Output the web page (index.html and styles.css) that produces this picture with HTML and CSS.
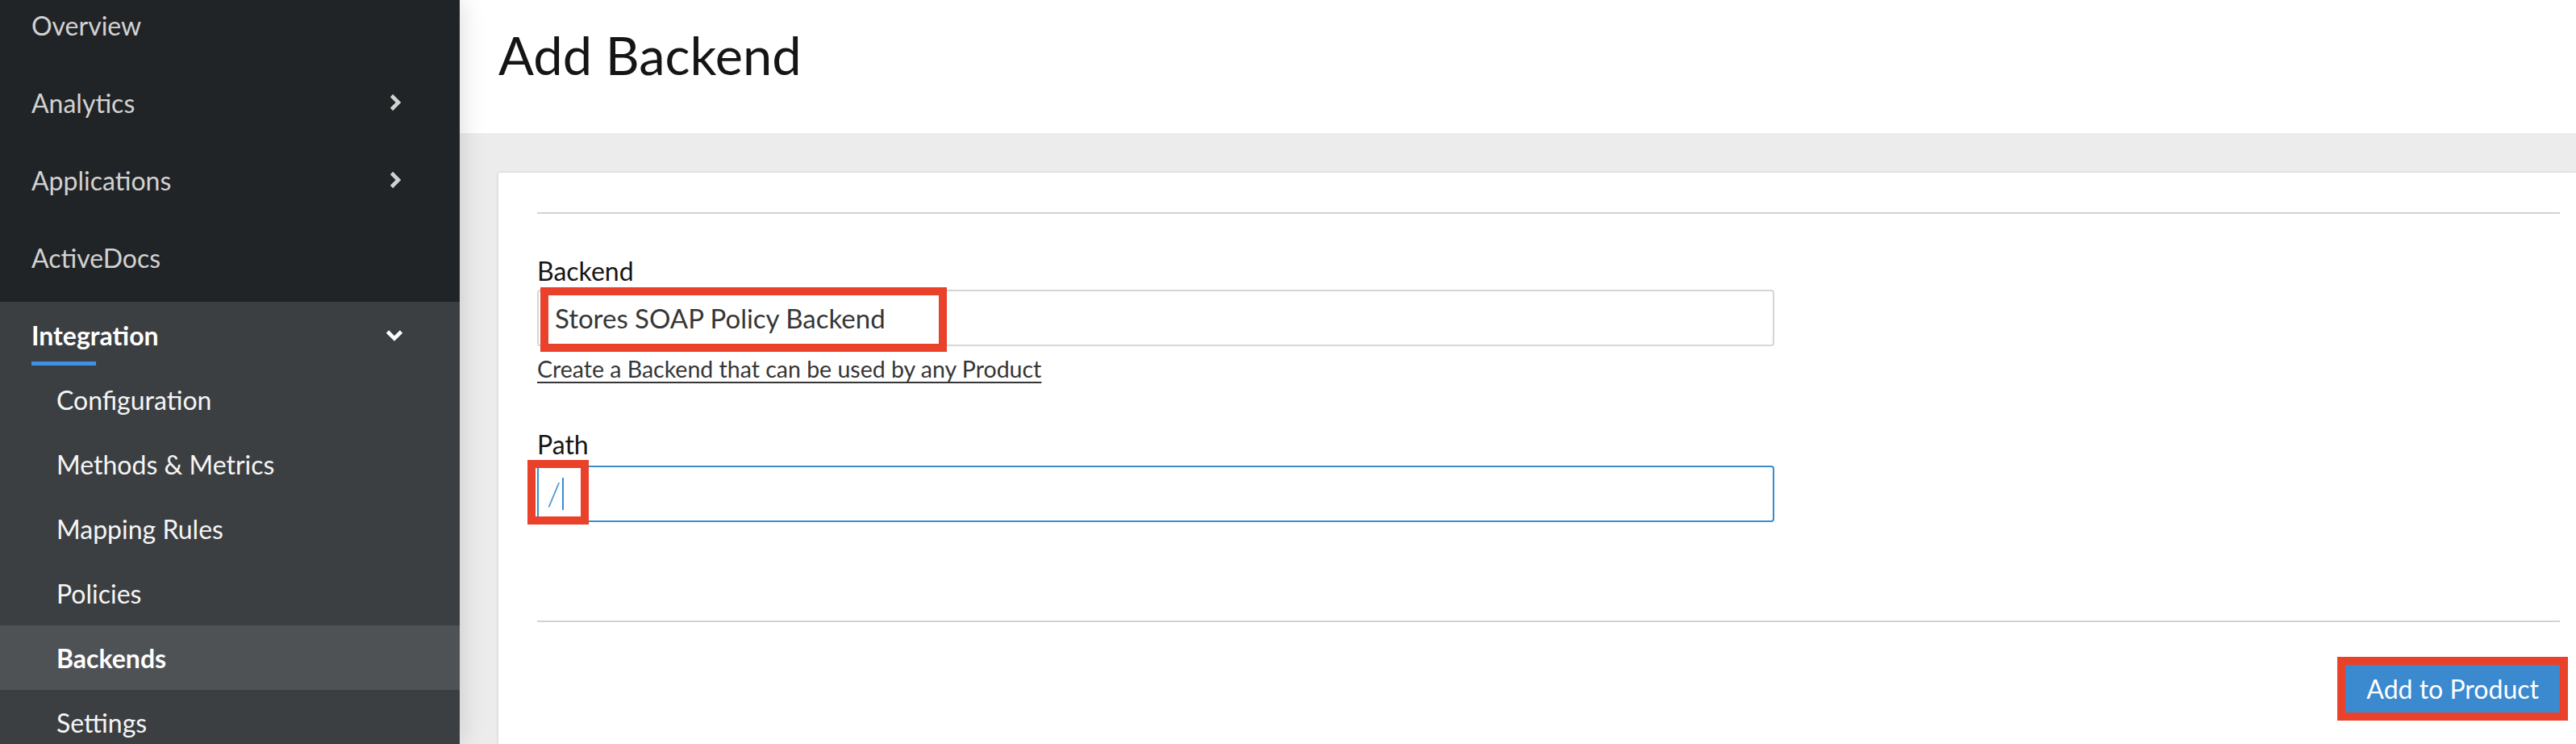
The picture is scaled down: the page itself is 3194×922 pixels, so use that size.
FILE: index.html
```html
<!DOCTYPE html>
<html lang="en">
<head>
<meta charset="utf-8">
<title>Add Backend</title>
<link rel="stylesheet" href="styles.css">
</head>
<body>
<div class="app">
  <aside class="sidebar">
    <ul class="nav">
      <li class="nav-item"><span>Overview</span></li>
      <li class="nav-item"><span>Analytics</span>
        <svg class="chev-right" width="16" height="22" viewBox="0 0 16 22"><path d="M3.5 2.5 L12 11 L3.5 19.5" fill="none" stroke="currentColor" stroke-width="4.6" stroke-linejoin="miter"/></svg>
      </li>
      <li class="nav-item"><span>Applications</span>
        <svg class="chev-right" width="16" height="22" viewBox="0 0 16 22"><path d="M3.5 2.5 L12 11 L3.5 19.5" fill="none" stroke="currentColor" stroke-width="4.6" stroke-linejoin="miter"/></svg>
      </li>
      <li class="nav-item"><span>ActiveDocs</span></li>
    </ul>
    <section class="nav-group">
      <div class="group-title">
        <div class="group-row">
          <span>Integration</span>
          <svg class="chev-down" width="22" height="15" viewBox="0 0 22 15"><path d="M2.5 3 L11 11.5 L19.5 3" fill="none" stroke="currentColor" stroke-width="4.6" stroke-linejoin="miter"/></svg>
        </div>
        <span class="group-bar"></span>
      </div>
      <ul class="subnav">
        <li class="sub-item">Configuration</li>
        <li class="sub-item">Methods &amp; Metrics</li>
        <li class="sub-item">Mapping Rules</li>
        <li class="sub-item">Policies</li>
        <li class="sub-item is-current">Backends</li>
        <li class="sub-item">Settings</li>
      </ul>
    </section>
  </aside>

  <main class="main">
    <header class="page-header">
      <h1 class="page-title">Add Backend</h1>
    </header>
    <section class="page-body">
      <form class="card">
        <hr class="rule">
        <div class="field field-backend">
          <label class="label" for="backend">Backend</label>
          <div class="control-wrap">
            <input class="control" id="backend" type="text" value="Stores SOAP Policy Backend" readonly>
            <span class="mark mark-backend"></span>
          </div>
          <a class="help-link" href="#">Create a Backend that can be used by any Product</a>
        </div>
        <div class="field field-path">
          <label class="label">Path</label>
          <div class="control-wrap">
            <div class="control control-focus"><span class="slash">/</span><span class="caret"></span></div>
            <span class="mark mark-path"></span>
          </div>
        </div>
        <hr class="rule rule-bottom">
        <div class="actions">
          <button class="btn-primary" type="button">Add to Product</button>
        </div>
      </form>
    </section>
  </main>
</div>
</body>
</html>
```

FILE: styles.css
```css
* { box-sizing: border-box; }

html, body {
  margin: 0;
  padding: 0;
  height: 100%;
  overflow: hidden;
}

body {
  font-family: "Lato", "Liberation Sans", sans-serif;
  background: #ececec;
  color: #151515;
}

.app {
  display: flex;
  height: 922px;
}

/* ---------- Sidebar ---------- */
.sidebar {
  position: relative;
  z-index: 2;
  width: 570px;
  flex: 0 0 570px;
  background: #212427;
  box-shadow: 0 0 30px rgba(0, 0, 0, 0.16);
  display: flex;
  flex-direction: column;
  overflow: hidden;
}

.nav {
  list-style: none;
  margin: -17px 0 0 0;
  padding: 0;
}

.nav-item {
  height: 96px;
  display: flex;
  align-items: center;
  justify-content: space-between;
  padding: 0 72px 0 39px;
  font-size: 32px;
  color: #d2d2d2;
}

.chev-right {
  color: #d2d2d2;
}

.nav-group {
  margin-top: 7px;
  background: #3c3f42;
  flex: 1;
}

.group-title {
  padding: 21px 70px 1px 39px;
  height: 81px;
  display: flex;
  flex-direction: column;
}

.group-row {
  height: 40px;
  display: flex;
  align-items: center;
  justify-content: space-between;
  font-size: 32px;
  font-weight: 700;
  color: #ffffff;
}

.chev-down {
  color: #ffffff;
}

.group-bar {
  display: block;
  width: 80px;
  height: 5px;
  margin-top: 13px;
  background: #3c92e8;
}

.subnav {
  list-style: none;
  margin: 0;
  padding: 0;
}

.sub-item {
  height: 80px;
  display: flex;
  align-items: center;
  padding-left: 70px;
  font-size: 32px;
  color: #f5f5f5;
}

.sub-item.is-current {
  background: #4f5255;
  font-weight: 700;
  color: #ffffff;
}

/* ---------- Main ---------- */
.main {
  flex: 1;
  display: flex;
  flex-direction: column;
  min-width: 0;
  background: #ececec;
}

.page-header {
  height: 165px;
  flex: 0 0 165px;
  background: #ffffff;
  padding: 30px 0 0 48px;
}

.page-title {
  margin: 0;
  font-size: 65px;
  line-height: 77px;
  font-weight: 400;
  color: #151515;
}

.page-body {
  flex: 1;
  display: flex;
  padding: 49px 0 0 48px;
}

.card {
  flex: 1;
  margin: 0;
  background: #ffffff;
  padding: 49px 20px 0 48px;
  box-shadow: -1px 0 3px rgba(0, 0, 0, 0.08), 0 -1px 2px rgba(0, 0, 0, 0.05);
}

.rule {
  margin: 0;
  border: 0;
  border-top: 2px solid #d2d2d2;
  height: 0;
}

.rule-bottom {
  margin-top: 122px;
}

.field-backend {
  margin-top: 52px;
}

.field-path {
  margin-top: 58px;
}

.label {
  display: block;
  font-size: 32px;
  line-height: 38px;
  color: #151515;
  margin-bottom: 4px;
}

.field-path .label {
  margin-bottom: 7px;
}

.control-wrap {
  position: relative;
  width: 1534px;
}

.control {
  display: flex;
  align-items: center;
  width: 100%;
  height: 70px;
  margin: 0;
  padding: 0 20px;
  border: 2px solid #d6d6d6;
  border-radius: 4px;
  background: #ffffff;
  font-family: "Lato", "Liberation Sans", sans-serif;
  font-size: 33px;
  color: #363636;
  outline: none;
}

.control-focus {
  border-color: #3b8bd3;
  padding-left: 10px;
}

.slash {
  font-size: 40px;
  line-height: 40px;
  font-weight: 300;
  color: #3b8bd3;
}

.caret {
  display: block;
  width: 2px;
  height: 40px;
  margin-left: 2px;
  background: #3b8bd3;
}

.help-link {
  display: block;
  width: max-content;
  margin-top: 11px;
  font-size: 28.5px;
  line-height: 34px;
  color: #363636;
  text-decoration: underline;
  text-decoration-thickness: 2px;
  text-underline-offset: 5px;
}

/* annotation highlight boxes */
.mark {
  position: absolute;
  border: 10px solid #e9412a;
  pointer-events: none;
}

.mark-backend {
  left: 4px;
  top: -3px;
  width: 504px;
  height: 80px;
}

.mark-path {
  left: -12px;
  top: -7px;
  width: 76px;
  height: 80px;
}

.actions {
  display: flex;
  justify-content: flex-end;
  margin-top: 53px;
}

.btn-primary {
  height: 59px;
  padding: 0 26px;
  border: 0;
  border-radius: 0;
  background: #3b89cf;
  color: #ffffff;
  font-family: "Lato", "Liberation Sans", sans-serif;
  font-size: 32px;
  outline: 10px solid #e9412a;
}
```
